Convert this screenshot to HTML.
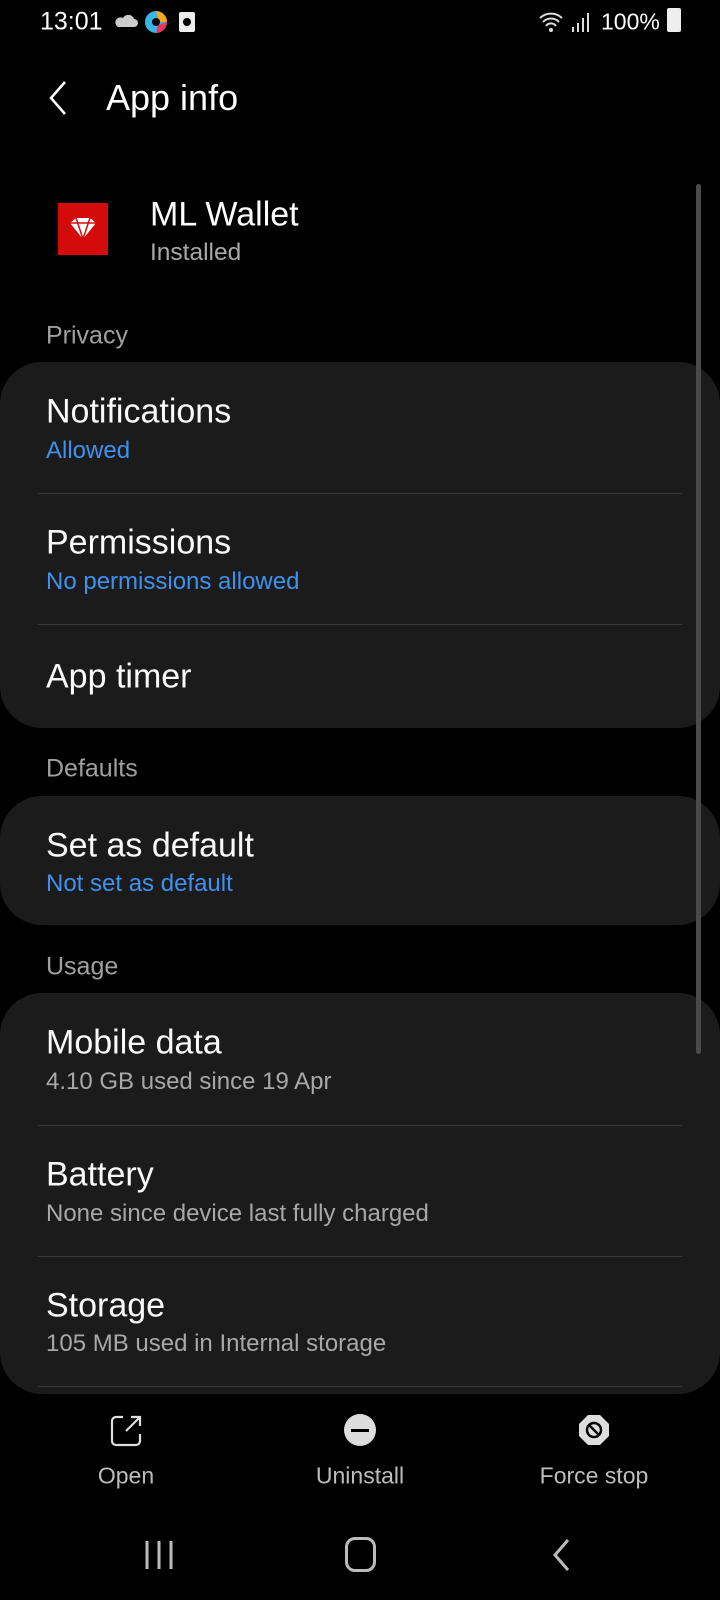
<!DOCTYPE html>
<html><head><meta charset="utf-8"><style>
*{margin:0;padding:0;box-sizing:border-box}
body{width:720px;height:1600px;background:#000;color:#fff;font-family:"Liberation Sans",sans-serif;position:relative;overflow:hidden}
.a{position:absolute;white-space:nowrap}
.t{font-size:34px;color:#fafafa;transform:translateY(-50%)}
.s{font-size:24px;color:#a8a8a8;transform:translateY(-50%)}
.b{color:#3e91ee}
.h{font-size:25px;color:#a0a0a0;transform:translateY(-50%);left:46px}
.card{position:absolute;left:0;width:720px;background:#1b1b1b;border-radius:42px}
.d{position:absolute;left:38px;width:644px;height:1px;background:#3a3a3a}
.lbl{font-size:23px;color:#bdbdbd;transform:translate(-50%,-50%)}
</style></head><body>
<div class="a" style="left:40px;top:22px;font-size:25px;transform:translateY(-50%)">13:01</div>
<svg class="a" style="left:114px;top:13px" width="24" height="16"><path d="M4 14h16a4 4 0 0 0 0-8 6 6 0 0 0-11-1 4.5 4.5 0 0 0-5 9z" fill="#ccc"/></svg>
<svg class="a" style="left:144px;top:9px" width="24" height="26"><circle cx="12" cy="13" r="11" fill="#37b5e5"/><path d="M12 2a11 11 0 0 1 11 11h-8z" fill="#f7a81b"/><path d="M23 13a11 11 0 0 1-11 11l2-8z" fill="#e8365f"/><circle cx="12" cy="13" r="4" fill="#000"/></svg>
<svg class="a" style="left:178px;top:11px" width="18" height="22"><rect x="1" y="1" width="16" height="20" rx="2" fill="#eee"/><circle cx="9" cy="11" r="4" fill="#000"/></svg>
<svg class="a" style="left:538px;top:10px" width="62" height="24"><path d="M2 8a16 16 0 0 1 22 0M5 12a11 11 0 0 1 16 0M8 16a6 6 0 0 1 10 0" stroke="#ddd" stroke-width="2" fill="none"/><circle cx="13" cy="20" r="2" fill="#ddd"/><rect x="34" y="17" width="2" height="5" fill="#ddd"/><rect x="39" y="13" width="2" height="9" fill="#ddd"/><rect x="44" y="8" width="2" height="14" fill="#ddd"/><rect x="49" y="3" width="2" height="19" fill="#ddd"/></svg>
<div class="a" style="left:601px;top:22px;font-size:23px;transform:translateY(-50%)">100%</div>
<div class="a" style="left:667px;top:8px;width:14px;height:24px;background:#eee;border-radius:2px"></div>
<svg class="a" style="left:46px;top:80px" width="24" height="36"><path d="M19 2L5 18l14 16" stroke="#fff" stroke-width="2.5" fill="none"/></svg>
<div class="a" style="left:106px;top:98px;font-size:36px;transform:translateY(-50%)">App info</div>
<div class="a" style="left:58px;top:203px;width:50px;height:52px;background:#d40b0b"></div>
<svg class="a" style="left:66px;top:217px" width="34" height="26"><path d="M4 6l6-5h14l6 5-13 16z" fill="#fff"/><path d="M4 6h26M10 1l7 21M24 1l-7 21" stroke="#d40b0b" stroke-width="1.5"/></svg>
<div class="a" style="left:150px;top:215px;font-size:34px;transform:translateY(-50%)">ML Wallet</div>
<div class="a s" style="left:150px;top:253px;font-size:24.5px">Installed</div>
<div class="a h" style="top:336px">Privacy</div>
<div class="card" style="top:362px;height:366px"></div>
<div class="a t" style="left:46px;top:412px">Notifications</div>
<div class="a s b" style="left:46px;top:451px">Allowed</div>
<div class="d" style="top:493px"></div>
<div class="a t" style="left:46px;top:543px">Permissions</div>
<div class="a s b" style="left:46px;top:582px">No permissions allowed</div>
<div class="d" style="top:624px"></div>
<div class="a t" style="left:46px;top:677px">App timer</div>
<div class="a h" style="top:769px">Defaults</div>
<div class="card" style="top:796px;height:129px"></div>
<div class="a t" style="left:46px;top:846px">Set as default</div>
<div class="a s b" style="left:46px;top:884px">Not set as default</div>
<div class="a h" style="top:967px">Usage</div>
<div class="card" style="top:993px;height:401px"></div>
<div class="a t" style="left:46px;top:1043px">Mobile data</div>
<div class="a s" style="left:46px;top:1082px">4.10 GB used since 19 Apr</div>
<div class="d" style="top:1125px"></div>
<div class="a t" style="left:46px;top:1175px">Battery</div>
<div class="a s" style="left:46px;top:1214px">None since device last fully charged</div>
<div class="d" style="top:1256px"></div>
<div class="a t" style="left:46px;top:1306px">Storage</div>
<div class="a s" style="left:46px;top:1344px">105 MB used in Internal storage</div>
<div class="d" style="top:1386px"></div>
<div class="a" style="left:696px;top:184px;width:5px;height:870px;background:#4a4a4a;border-radius:3px;z-index:5"></div>
<svg class="a" style="left:109px;top:1414px" width="34" height="34"><path d="M14 3H7a4 4 0 0 0-4 4v20a4 4 0 0 0 4 4h20a4 4 0 0 0 4-4v-7" stroke="#ddd" stroke-width="2.2" fill="none"/><path d="M17 17L31 3M22 3h9v9" stroke="#ddd" stroke-width="2.2" fill="none"/></svg>
<div class="a" style="left:344px;top:1414px;width:32px;height:32px;border-radius:50%;background:#ddd"></div>
<div class="a" style="left:351px;top:1429px;width:18px;height:3px;background:#000"></div>
<svg class="a" style="left:578px;top:1414px" width="32" height="32"><path d="M10 1h12l9 9v12l-9 9H10l-9-9V10z" fill="#ddd"/><circle cx="16" cy="16" r="7" stroke="#000" stroke-width="2.5" fill="none"/><path d="M11 11l10 10" stroke="#000" stroke-width="2.5"/></svg>
<div class="a lbl" style="left:126px;top:1476px">Open</div>
<div class="a lbl" style="left:360px;top:1476px">Uninstall</div>
<div class="a lbl" style="left:594px;top:1476px">Force stop</div>
<svg class="a" style="left:144px;top:1539px" width="30" height="32"><path d="M3 2v28M15 2v28M27 2v28" stroke="#bbb" stroke-width="3"/></svg>
<div class="a" style="left:345px;top:1537px;width:31px;height:35px;border:3px solid #bbb;border-radius:10px"></div>
<svg class="a" style="left:550px;top:1538px" width="22" height="34"><path d="M18 2L5 17l13 15" stroke="#bbb" stroke-width="3" fill="none"/></svg>
</body></html>
